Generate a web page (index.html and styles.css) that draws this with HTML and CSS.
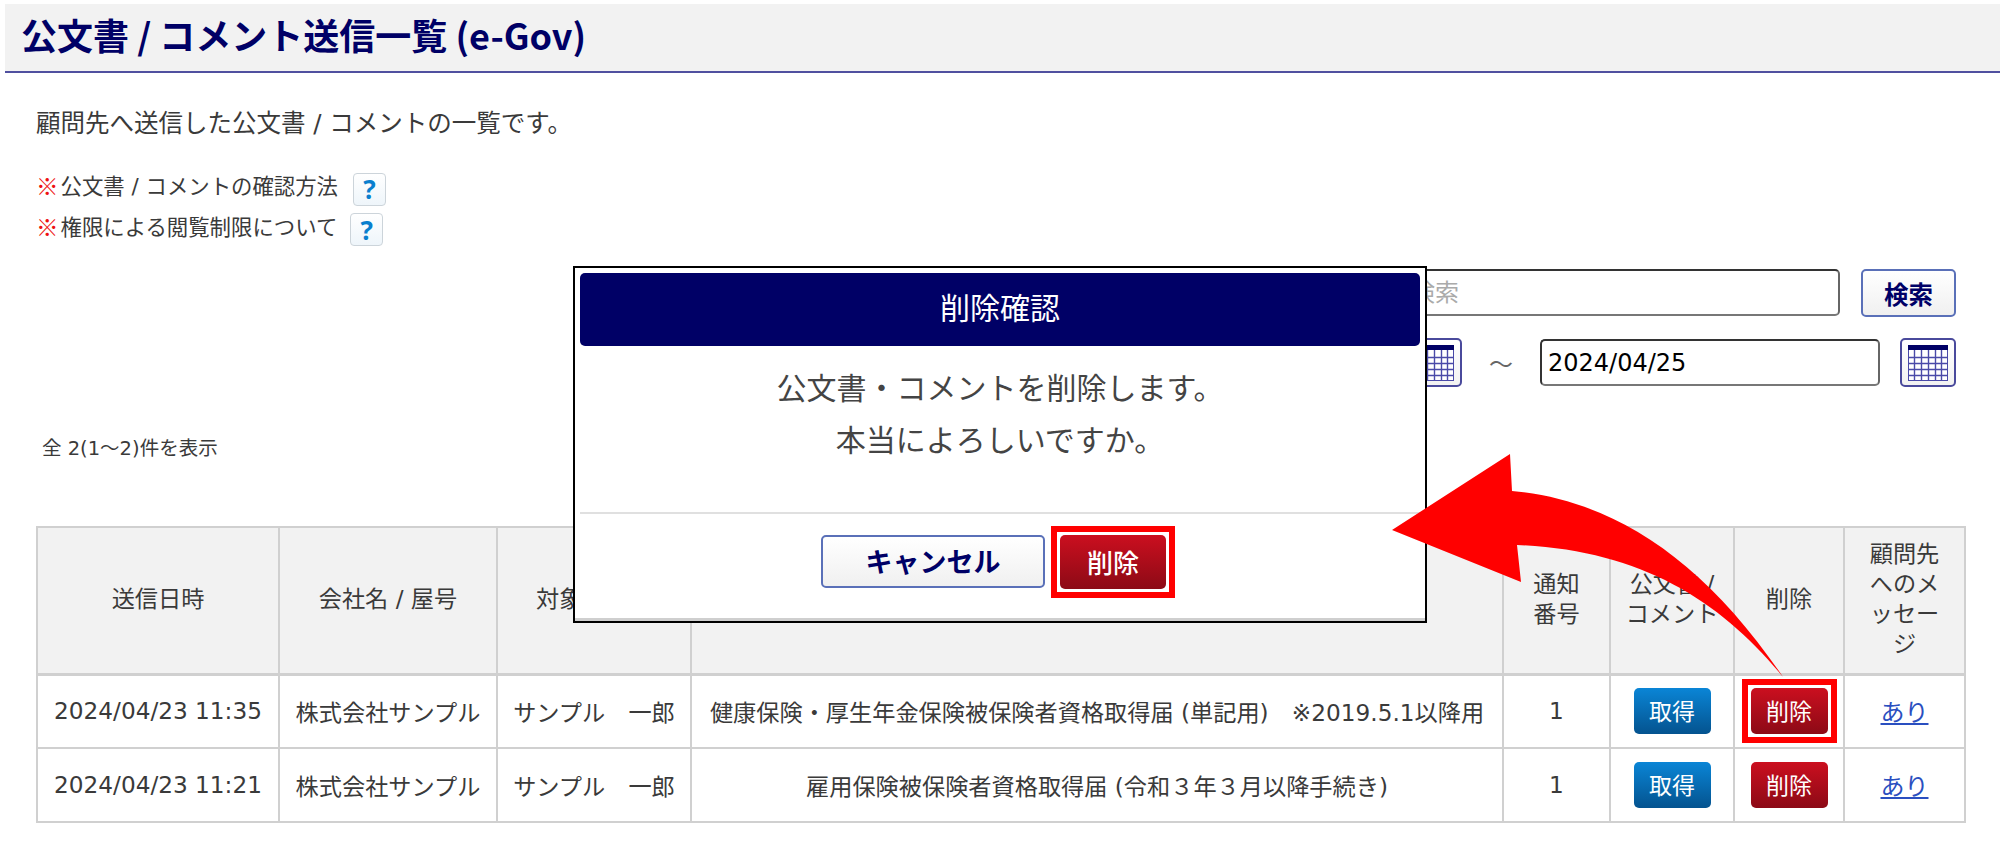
FILE: index.html
```html
<!DOCTYPE html>
<html lang="ja">
<head>
<meta charset="utf-8">
<title>公文書 / コメント送信一覧 (e-Gov)</title>
<link rel="stylesheet" href="styles.css">
</head>
<body>
<div class="page">
  <h1 class="page-title">公文書 / コメント送信一覧 (e-Gov)</h1>
  <main class="content">
    <p class="intro">顧問先へ送信した公文書 / コメントの一覧です。</p>
    <div class="notes">
      <div class="note note-a"><span class="mark">※</span><span class="note-text">公文書 / コメントの確認方法</span><button class="help">?</button></div>
      <div class="note note-b"><span class="mark">※</span><span class="note-text">権限による閲覧制限について</span><button class="help">?</button></div>
    </div>
    <div class="search-row">
      <input class="field field-search" type="text" placeholder="キーワード検索">
      <button class="btn-outline btn-search">検索</button>
    </div>
    <div class="date-row">
      <input class="field field-date" type="text" value="2024/04/23">
      <button class="cal"><svg viewBox="0 0 40 36" width="40" height="36"><rect x="0.5" y="0.5" width="39" height="35" fill="#fff" stroke="#4a4aa8"/><rect x="0" y="0" width="40" height="5" fill="#000066"/><path d="M0 12.5H40M0 18.5H40M0 24.5H40M0 30.5H40M6.5 5V36M13.5 5V36M20.5 5V36M27.5 5V36M33.5 5V36" stroke="#4a4aa8" stroke-width="1.4" fill="none"/></svg></button>
      <span class="tilde">～</span>
      <input class="field field-date" type="text" value="2024/04/25">
      <button class="cal"><svg viewBox="0 0 40 36" width="40" height="36"><rect x="0.5" y="0.5" width="39" height="35" fill="#fff" stroke="#4a4aa8"/><rect x="0" y="0" width="40" height="5" fill="#000066"/><path d="M0 12.5H40M0 18.5H40M0 24.5H40M0 30.5H40M6.5 5V36M13.5 5V36M20.5 5V36M27.5 5V36M33.5 5V36" stroke="#4a4aa8" stroke-width="1.4" fill="none"/></svg></button>
    </div>
    <p class="count">全 2(1～2)件を表示</p>
    <table class="list">
      <colgroup>
        <col class="c1"><col class="c2"><col class="c3"><col class="c4"><col class="c5"><col class="c6"><col class="c7"><col class="c8">
      </colgroup>
      <thead>
        <tr>
          <th>送信日時</th><th>会社名 / 屋号</th><th>対象者氏名</th><th>手続名</th><th>通知<br>番号</th><th>公文書 /<br>コメント</th><th>削除</th><th>顧問先<br>へのメ<br>ッセー<br>ジ</th>
        </tr>
      </thead>
      <tbody>
        <tr>
          <td>2024/04/23 11:35</td><td>株式会社サンプル</td><td>サンプル　一郎</td><td>健康保険・厚生年金保険被保険者資格取得届 (単記用)　※2019.5.1以降用</td><td>1</td>
          <td><button class="btn-fill btn-blue">取得</button></td>
          <td><button class="btn-fill btn-red ring">削除</button></td>
          <td><a class="link" href="#">あり</a></td>
        </tr>
        <tr>
          <td>2024/04/23 11:21</td><td>株式会社サンプル</td><td>サンプル　一郎</td><td>雇用保険被保険者資格取得届 (令和３年３月以降手続き)</td><td>1</td>
          <td><button class="btn-fill btn-blue">取得</button></td>
          <td><button class="btn-fill btn-red">削除</button></td>
          <td><a class="link" href="#">あり</a></td>
        </tr>
      </tbody>
    </table>
  </main>
</div>

<section class="modal">
  <h2 class="modal-head">削除確認</h2>
  <div class="modal-body">
    <p>公文書・コメントを削除します。</p>
    <p>本当によろしいですか。</p>
  </div>
  <div class="modal-foot">
    <button class="btn-outline btn-cancel">キャンセル</button>
    <button class="btn-fill btn-red btn-confirm ring">削除</button>
  </div>
</section>

<svg class="arrow" viewBox="0 0 2000 857" width="2000" height="857">
  <path d="M1392 530L1510 454L1512 491C1610 500 1700 555 1783 677C1720 600 1640 550 1517 545L1521 582Z" fill="#ff0000"/>
</svg>
</body>
</html>
```
FILE: styles.css
```css
* { box-sizing: border-box; }
html, body { margin: 0; padding: 0; background: #fff; }
body {
  width: 2000px;
  height: 857px;
  overflow: hidden;
  position: relative;
  font-family: "DejaVu Sans", "Noto Sans CJK JP", sans-serif;
  color: #3a3a3a;
  font-size: 23px;
}
.page { padding: 4px 0 0 5px; }
.page-title {
  margin: 0;
  height: 69px;
  background: #f2f2f2;
  border-bottom: 2px solid #50509f;
  color: #000066;
  font-size: 36px;
  font-weight: 700;
  line-height: 61px;
  padding-left: 16px;
  font-family: "Noto Sans CJK JP", sans-serif;
}
.content { padding-left: 31px; }
.intro { margin: 33px 0 0; font-size: 24.5px; line-height: 36px; font-weight: 400; }
.notes { margin-top: 31px; }
.note { display: flex; align-items: center; font-size: 21.4px; }
.note-a { height: 32px; }
.note-b { height: 33px; margin-top: 8px; }
.mark { color: #ee1111; margin-right: 2px; font-size: 22.5px; font-weight: 700; font-family: "Noto Sans CJK JP", sans-serif; position: relative; top: -4px; }
.note-text { position: relative; top: -5px; }
.note-b .note-text { top: -4px; }
.note-a .help { margin-left: 15px; }
.note-b .help { margin-left: 13px; }
.help {
  width: 33px;
  height: 33px;
  padding: 0;
  border: 1px solid #ccd4da;
  border-radius: 4px;
  background: linear-gradient(#ffffff, #eef5fa);
  color: #0a7fce;
  font: 700 26px/30px "Noto Sans", sans-serif;
}
.search-row { display: flex; justify-content: flex-end; gap: 21px; margin: 23px 44px 0 0; }
.date-row { display: flex; justify-content: flex-end; align-items: center; margin: 21px 44px 0 0; height: 49px; }
.field {
  height: 47px;
  border: 2px solid #333;
  border-bottom-color: #777;
  border-right-color: #666;
  border-radius: 5px;
  font: 400 24px "DejaVu Sans", "Noto Sans CJK JP", sans-serif;
  color: #000;
  padding: 0 6px;
  background: #fff;
}
.field::placeholder { color: #aaa; opacity: 1; }
.field-search { width: 557px; }
.field-date { width: 340px; }
.cal {
  width: 56px;
  height: 49px;
  padding: 0;
  margin-left: 20px;
  border: 2px solid #4a4a9c;
  border-radius: 5px;
  background: linear-gradient(#fff, #f2f2f2);
  display: flex;
  align-items: center;
  justify-content: center;
}
.tilde { width: 78px; text-align: center; font-size: 24px; color: #666; font-family: "Noto Sans CJK JP", sans-serif; }
.btn-outline {
  border: 2px solid #5a70b8;
  border-radius: 5px;
  background: linear-gradient(#ffffff, #f0f0f0);
  color: #000066;
  font-weight: 700;
  font-family: "Noto Sans CJK JP", sans-serif;
  padding: 0;
}
.btn-search { width: 95px; height: 48px; font-size: 24.5px; }
.count { margin: 49px 0 0 6px; font-size: 19.5px; line-height: 26px; }
.list {
  table-layout: fixed;
  width: 1928px;
  margin-top: 64px;
  border-collapse: collapse;
  border: 2px solid #d0d0d0;
  font-size: 23.2px;
}
.c1 { width: 242px; } .c2 { width: 218px; } .c3 { width: 194px; } .c4 { width: 812px; }
.c5 { width: 107px; } .c6 { width: 124px; } .c7 { width: 110px; } .c8 { width: 121px; }
.list th, .list td { border: 2px solid #d0d0d0; text-align: center; padding: 0; vertical-align: middle; white-space: nowrap; }
.list th { background: #f2f2f2; height: 147px; font-weight: 400; line-height: 30px; border-bottom-width: 3px; padding-bottom: 3px; }
.list td { height: 74px; padding-bottom: 1px; }
.btn-fill {
  border: 0;
  border-radius: 5px;
  color: #fff;
  font: 400 23px "DejaVu Sans", "Noto Sans CJK JP", sans-serif;
  padding: 0 0 2px;
  width: 77px;
  height: 46px;
  vertical-align: middle;
}
.btn-blue { background: linear-gradient(#0a85d6, #04538f); }
.btn-red { background: linear-gradient(#cb0f1f, #8c0a16); }
.ring { position: relative; }
.ring::after {
  content: "";
  position: absolute;
  inset: -9px;
  border: 6px solid #ff0000;
}
.link { color: #2a4fc0; text-decoration: underline; font-size: 24px; }
.modal {
  position: absolute;
  left: 573px;
  top: 266px;
  width: 854px;
  height: 357px;
  background: #fff;
  border: 2px solid #000;
  padding: 5px 5px 0;
  box-shadow: inset 0 -3px 0 #cfcfcf;
}
.modal-head {
  margin: 0;
  height: 73px;
  background: #000066;
  border-radius: 5px;
  color: #fff;
  font-size: 30px;
  font-weight: 400;
  line-height: 71px;
  text-align: center;
}
.modal-body { height: 166px; padding-top: 17px; text-align: center; font-size: 30px; color: #444; }
.modal-body p { margin: 0; line-height: 52px; }
.modal-foot { display: flex; gap: 15px; padding: 21px 0 0 241px; border-top: 2px solid #e0e0e0; }
.btn-cancel { width: 224px; height: 53px; font-size: 27px; padding-bottom: 3px; }
.btn-confirm { width: 106px; height: 54px; font-size: 26px; font-family: "Noto Sans CJK JP", sans-serif; font-weight: 500; }
.arrow { position: absolute; left: 0; top: 0; pointer-events: none; }
```
